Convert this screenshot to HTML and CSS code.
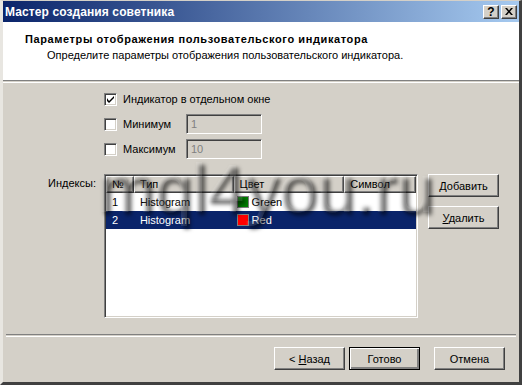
FILE: index.html
```html
<!DOCTYPE html>
<html lang="ru">
<head>
    <meta charset="UTF-8">
    <title>Мастер создания советника</title>
    <link rel="stylesheet" href="styles.css">
</head>
<body>
    <div class="window">
        <div class="titlebar">
            <span class="title">Мастер создания советника</span>
            <div class="caption-buttons">
                <span class="cap-btn">?</span>
                <span class="cap-btn close">
                    <svg width="8" height="7" viewBox="0 0 8 7"><path d="M0 0h2l2 2.5L6 0h2L5 3.5 8 7H6L4 4.5 2 7H0l3-3.5z" fill="#000"/></svg>
                </span>
            </div>
        </div>

        <div class="header">
            <div class="header-title">Параметры отображения пользовательского индикатора</div>
            <div class="header-sub">Определите параметры отображения пользовательского индикатора.</div>
        </div>
        <div class="sep"></div>

        <div class="content">
            <div class="options">
                <label class="check-row">
                    <span class="checkbox checked">
                        <svg width="7" height="7" viewBox="0 0 7 7"><path d="M0 2v3l2 2 5-5V0L2 5z" fill="#000"/></svg>
                    </span>
                    Индикатор в отдельном окне
                </label>
                <div class="check-row">
                    <span class="checkbox"></span>
                    <span class="check-label">Минимум</span>
                    <span class="field">1</span>
                </div>
                <div class="check-row">
                    <span class="checkbox"></span>
                    <span class="check-label">Максимум</span>
                    <span class="field">10</span>
                </div>
            </div>

            <div class="indexes">
                <div class="indexes-label">Индексы:</div>
                <div class="listview">
                    <div class="lv-head">
                        <span class="col c-num">№</span>
                        <span class="col c-type">Тип</span>
                        <span class="col c-color">Цвет</span>
                        <span class="col c-sym">Символ</span>
                    </div>
                    <div class="lv-row">
                        <span class="col c-num">1</span>
                        <span class="col c-type">Histogram</span>
                        <span class="col c-color"><i class="swatch green"></i>Green</span>
                        <span class="col c-sym"></span>
                    </div>
                    <div class="lv-row selected">
                        <span class="col c-num">2</span>
                        <span class="col c-type">Histogram</span>
                        <span class="col c-color"><i class="swatch red"></i>Red</span>
                        <span class="col c-sym"></span>
                    </div>
                </div>
                <div class="side-buttons">
                    <button class="btn side"><u>Д</u>обавить</button>
                    <button class="btn side"><u>У</u>далить</button>
                </div>
            </div>

            <div class="watermark">mql4you.ru</div>
        </div>

        <div class="sep bottom"></div>
        <div class="footer">
            <button class="btn">&lt; <u>Н</u>азад</button>
            <button class="btn default">Готово</button>
            <button class="btn cancel">Отмена</button>
        </div>
    </div>
</body>
</html>
```

FILE: styles.css
```css
html, body {
    margin: 0;
    padding: 0;
    background: #d4d0c8;
}
body {
    font-family: "Liberation Sans", Arial, sans-serif;
    font-size: 11px;
    color: #000;
}
.window {
    width: 522px;
    height: 385px;
    box-sizing: border-box;
    background: #d4d0c8;
    border-left: 3px solid #e8e6e1;
    border-top: 1px solid #d4d0c8;
    border-right: 3px solid #404040;
    border-bottom: 3px solid #404040;
    display: flex;
    flex-direction: column;
    position: relative;
}
.titlebar {
    height: 21px;
    background: linear-gradient(to right, #0a246a, #a6caf0);
    display: flex;
    align-items: center;
    justify-content: space-between;
    padding: 0 2px 0 2px;
}
.title {
    color: #fff;
    font-weight: bold;
    font-size: 12px;
    letter-spacing: 0.1px;
}
.caption-buttons {
    display: flex;
    gap: 2px;
}
.cap-btn {
    width: 16px;
    height: 14px;
    box-sizing: border-box;
    background: #d4d0c8;
    border-top: 1px solid #fff;
    border-left: 1px solid #fff;
    border-right: 1px solid #404040;
    border-bottom: 1px solid #404040;
    box-shadow: inset -1px -1px 0 #808080;
    display: flex;
    align-items: center;
    justify-content: center;
    font-weight: bold;
    font-size: 12px;
    line-height: 1;
}
.header {
    background: #fff;
    height: 58px;
    padding: 11px 0 0 22px;
    box-sizing: border-box;
}
.header-title {
    font-weight: bold;
    font-size: 11px;
    letter-spacing: 0.6px;
}
.header-sub {
    margin: 4px 0 0 22px;
}
.sep {
    height: 1px;
    border-top: 1px solid #808080;
    border-bottom: 1px solid #fff;
}
.content {
    flex: 1;
    position: relative;
    padding: 6px 0 0 0;
}
.options {
    margin-left: 101px;
    display: flex;
    flex-direction: column;
    gap: 5px;
}
.check-row {
    display: flex;
    align-items: center;
    gap: 6px;
    height: 20px;
}
.checkbox {
    width: 13px;
    height: 13px;
    box-sizing: border-box;
    background: #fff;
    border-top: 1px solid #808080;
    border-left: 1px solid #808080;
    border-right: 1px solid #fff;
    border-bottom: 1px solid #fff;
    box-shadow: inset 1px 1px 0 #404040, inset -1px -1px 0 #d4d0c8;
    display: flex;
    align-items: center;
    justify-content: center;
    flex: none;
}
.check-label {
    width: 57px;
}
.field {
    width: 76px;
    height: 20px;
    box-sizing: border-box;
    border-top: 1px solid #808080;
    border-left: 1px solid #808080;
    border-right: 1px solid #fff;
    border-bottom: 1px solid #fff;
    box-shadow: inset 1px 1px 0 #404040, inset -1px -1px 0 #d4d0c8;
    color: #808080;
    padding: 3px 0 0 4px;
}
.indexes {
    display: grid;
    grid-template-columns: 95px 314px auto;
    margin-top: 15px;
    column-gap: 6px;
}
.indexes-label {
    text-align: right;
    padding-top: 3px;
    padding-right: 2px;
}
.listview {
    height: 144px;
    box-sizing: border-box;
    background: #fff;
    border-top: 1px solid #808080;
    border-left: 1px solid #808080;
    border-right: 1px solid #fff;
    border-bottom: 1px solid #fff;
    box-shadow: inset 1px 1px 0 #404040, inset -1px -1px 0 #d4d0c8;
    padding: 1px 1px 0 1px;
}
.lv-head, .lv-row {
    display: flex;
}
.lv-head .col {
    height: 17px;
    box-sizing: border-box;
    background: #d4d0c8;
    border-top: 1px solid #fff;
    border-left: 1px solid #fff;
    border-right: 1px solid #404040;
    border-bottom: 1px solid #404040;
    box-shadow: inset -1px -1px 0 #808080;
    padding: 1px 0 0 5px;
}
.lv-row .col {
    height: 18px;
    display: flex;
    align-items: center;
    padding-left: 6px;
    box-sizing: border-box;
}
.lv-row.selected {
    background: #0a246a;
    color: #fff;
}
.c-num { width: 28px; }
.c-type { width: 100px; }
.c-color { width: 111px; }
.c-sym { width: 72px; }
.lv-row .c-color { padding-left: 3px; }
.swatch {
    width: 12px;
    height: 12px;
    box-sizing: border-box;
    border: 1px solid #808080;
    margin-right: 3px;
}
.swatch.green { background: #008000; }
.swatch.red { background: #ff0000; }
.side-buttons {
    display: flex;
    flex-direction: column;
    gap: 9px;
    margin-left: 4px;
}
.btn {
    font-family: "Liberation Sans", Arial, sans-serif;
    font-size: 11px;
    color: #000;
    background: #d4d0c8;
    width: 71px;
    height: 23px;
    box-sizing: border-box;
    border-top: 1px solid #fff;
    border-left: 1px solid #fff;
    border-right: 1px solid #404040;
    border-bottom: 1px solid #404040;
    box-shadow: inset -1px -1px 0 #808080;
    padding: 0;
}
.btn.default {
    border: 1px solid #000;
    box-shadow: inset 1px 1px 0 #fff, inset -2px -2px 0 #808080;
}
.footer {
    display: flex;
    justify-content: flex-end;
    gap: 4px;
    padding: 10px 14px 12px 0;
}
.btn.cancel {
    margin-left: 10px;
}
.sep.bottom {
    margin: 0 3px 0 3px;
}
.watermark {
    position: absolute;
    left: 94px;
    top: 66px;
    font-family: "Liberation Sans", Arial, sans-serif;
    font-size: 68px;
    color: rgba(255, 255, 255, 0.12);
    text-shadow: 3px 3px 4px rgba(0, 0, 0, 0.6);
    pointer-events: none;
}
```
